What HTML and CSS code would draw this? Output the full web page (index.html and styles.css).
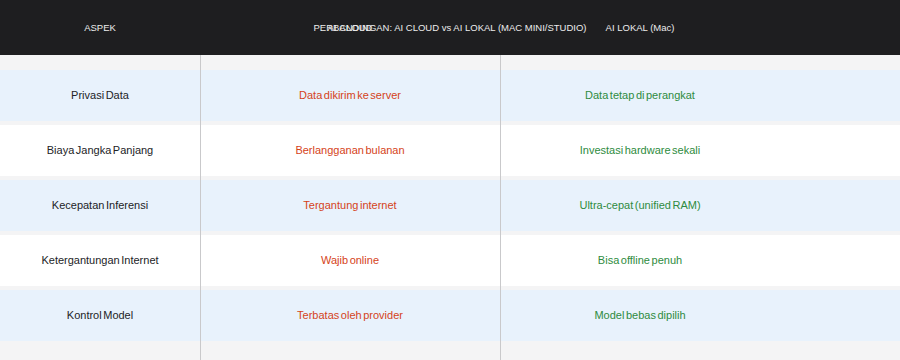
FILE: index.html
```html
<!DOCTYPE html>
<html lang="id">
<head>
<meta charset="utf-8">
<title>Perbandingan AI Cloud vs AI Lokal</title>
<link rel="stylesheet" href="styles.css">
</head>
<body>
<div class="page">
  <header class="head">
    <div class="hcell">ASPEK</div>
    <div class="hcell">AI CLOUD</div>
    <div class="hcell">AI LOKAL (Mac)</div>
    <div class="hcell"></div>
    <div class="title">PERBANDINGAN: AI CLOUD vs AI LOKAL (MAC MINI/STUDIO)</div>
  </header>
  <main class="table">
    <div class="row blue">
      <div class="cell aspect">Privasi Data</div>
      <div class="cell cloud">Data dikirim ke server</div>
      <div class="cell local">Data tetap di perangkat</div>
      <div class="cell"></div>
    </div>
    <div class="row white">
      <div class="cell aspect">Biaya Jangka Panjang</div>
      <div class="cell cloud">Berlangganan bulanan</div>
      <div class="cell local">Investasi hardware sekali</div>
      <div class="cell"></div>
    </div>
    <div class="row blue">
      <div class="cell aspect">Kecepatan Inferensi</div>
      <div class="cell cloud">Tergantung internet</div>
      <div class="cell local">Ultra-cepat (unified RAM)</div>
      <div class="cell"></div>
    </div>
    <div class="row white">
      <div class="cell aspect">Ketergantungan Internet</div>
      <div class="cell cloud">Wajib online</div>
      <div class="cell local">Bisa offline penuh</div>
      <div class="cell"></div>
    </div>
    <div class="row blue">
      <div class="cell aspect">Kontrol Model</div>
      <div class="cell cloud">Terbatas oleh provider</div>
      <div class="cell local">Model bebas dipilih</div>
      <div class="cell"></div>
    </div>
    <div class="vline first"></div>
    <div class="vline second"></div>
  </main>
</div>
</body>
</html>
```
FILE: styles.css
```css
* { box-sizing: border-box; }
html, body { margin: 0; padding: 0; }
body {
  width: 900px;
  height: 360px;
  overflow: hidden;
  background: #f4f4f5;
  font-family: "Liberation Sans", Arial, sans-serif;
}
.page {
  width: 900px;
  height: 360px;
  display: flex;
  flex-direction: column;
}
.head {
  position: relative;
  height: 55px;
  flex: none;
  background: #1e1e20;
  color: #ececec;
  font-size: 9.5px;
  display: grid;
  grid-template-columns: 200px 300px 280px 1fr;
  align-items: center;
}
.hcell {
  text-align: center;
  padding-bottom: 1px;
}
.title {
  position: absolute;
  left: 0;
  right: 0;
  top: 0;
  bottom: 0;
  display: flex;
  align-items: center;
  justify-content: center;
  padding-bottom: 1px;
}
.table {
  position: relative;
  flex: 1;
  padding-top: 15px;
  display: flex;
  flex-direction: column;
  gap: 4px;
}
.row {
  height: 51px;
  display: grid;
  grid-template-columns: 200px 300px 280px 1fr;
  align-items: center;
  font-size: 11px;
  word-spacing: -1.5px;
}
.row.blue { background: #e8f2fc; }
.row.white { background: #ffffff; }
.cell {
  text-align: center;
  padding-bottom: 2px;
}
.aspect { color: #222326; }
.cloud { color: #d5431a; }
.local { color: #2e8b40; }
.vline {
  position: absolute;
  top: 0;
  bottom: 0;
  width: 1px;
  background: #c9c9cb;
}
.vline.first { left: 200px; }
.vline.second { left: 500px; }
```
